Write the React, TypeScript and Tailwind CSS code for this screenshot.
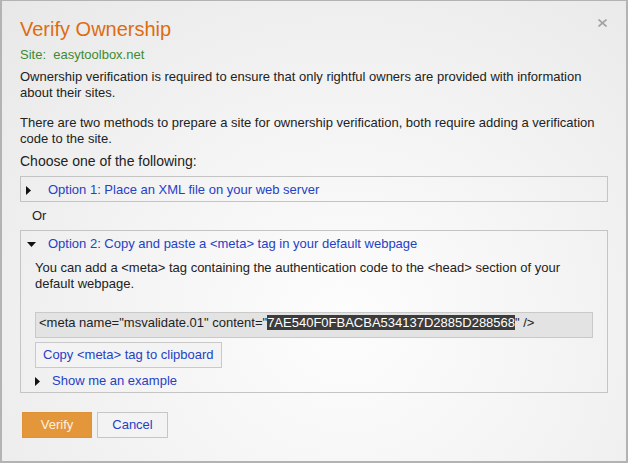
import React from "react";

function TriRight() {
  return (
    <svg width="5" height="9" viewBox="0 0 5 9" className="block">
      <polygon points="0,0 5,4.5 0,9" fill="#111" />
    </svg>
  );
}

function TriDown() {
  return (
    <svg width="9" height="5" viewBox="0 0 9 5" className="block">
      <polygon points="0,0 9,0 4.5,5" fill="#111" />
    </svg>
  );
}

export default function App() {
  return (
    <div className="relative w-[628px] h-[463px] border-2 border-t border-[#b3b3b3] bg-[radial-gradient(ellipse_at_55%_70%,#fdfdfd_0%,#f4f4f4_45%,#e8e8e8_100%)] font-['Liberation_Sans',Arial,sans-serif] text-[13px] leading-[16px] text-[#222] px-[18px] pt-[16px] overflow-hidden">
      <button className="absolute left-[596px] top-[18px] w-[9px] h-[8px] p-0">
        <svg width="9" height="8" viewBox="0 0 9 8" className="block">
          <line x1="0.5" y1="0.5" x2="8.5" y2="7.5" stroke="#a2a2a2" strokeWidth="1.6" />
          <line x1="8.5" y1="0.5" x2="0.5" y2="7.5" stroke="#a2a2a2" strokeWidth="1.6" />
        </svg>
      </button>

      <h1 className="text-[20px] leading-[24px] text-[#de6c12] font-normal">Verify Ownership</h1>
      <div className="mt-[6px] text-[#3f8a2e] whitespace-pre">Site:  easytoolbox.net</div>
      <p className="mt-[6px]">
        Ownership verification is required to ensure that only rightful owners are provided with information about their sites.
      </p>
      <p className="mt-[14px]">
        There are two methods to prepare a site for ownership verification, both require adding a verification code to the site.
      </p>
      <div className="mt-[6px] text-[14px] leading-[16px]">Choose one of the following:</div>

      <div className="mt-[7px] border border-[#c4c4c4] pl-[5px] pt-[5px] pb-[3px] flex items-center">
        <div className="w-[22px] flex items-center">
          <TriRight />
        </div>
        <span className="text-[#2541c6]">Option 1: Place an XML file on your web server</span>
      </div>

      <div className="mt-[6px] pl-[12px]">Or</div>

      <div className="mt-[6px] border border-[#c4c4c4] pt-[5px] pb-[3px]">
        <div className="flex items-center pl-[5px]">
          <div className="w-[22px] flex items-center pl-[1px]">
            <TriDown />
          </div>
          <span className="text-[#2541c6]">Option 2: Copy and paste a &lt;meta&gt; tag in your default webpage</span>
        </div>
        <div className="px-[14px]">
          <p className="mt-[8px] pr-[20px]">
            You can add a &lt;meta&gt; tag containing the authentication code to the &lt;head&gt; section of your default webpage.
          </p>
          <div className="mt-[20px] border border-[#c9c9c9] bg-[#e3e3e3] pl-[3px] pt-[2px] pb-[6px] whitespace-pre">
            &lt;meta name="msvalidate.01" content="<span className="bg-[#3c3c3c] text-white">7AE540F0FBACBA534137D2885D288568</span>" /&gt;
          </div>
          <div className="mt-[4px] flex">
            <button className="border border-[#c9c9c9] bg-[#f3f3f3] px-[7px] pt-[4px] pb-[4px] text-[#2541c6] leading-[16px] w-[187px] text-left">
              Copy &lt;meta&gt; tag to clipboard
            </button>
          </div>
          <div className="mt-[5px] flex items-center">
            <div className="w-[17px] flex items-center">
              <TriRight />
            </div>
            <span className="text-[#2541c6]">Show me an example</span>
          </div>
        </div>
      </div>

      <div className="mt-[19px] ml-[2px] flex gap-[5px]">
        <button className="w-[70px] bg-[#e3973a] border border-[#df9235] text-[#fcf1e4] pt-[4px] pb-[4px] leading-[16px]">
          Verify
        </button>
        <button className="w-[71px] bg-[#f3f3f3] border border-[#c6c6c6] text-[#2541c6] pt-[4px] pb-[4px] leading-[16px]">
          Cancel
        </button>
      </div>
    </div>
  );
}
